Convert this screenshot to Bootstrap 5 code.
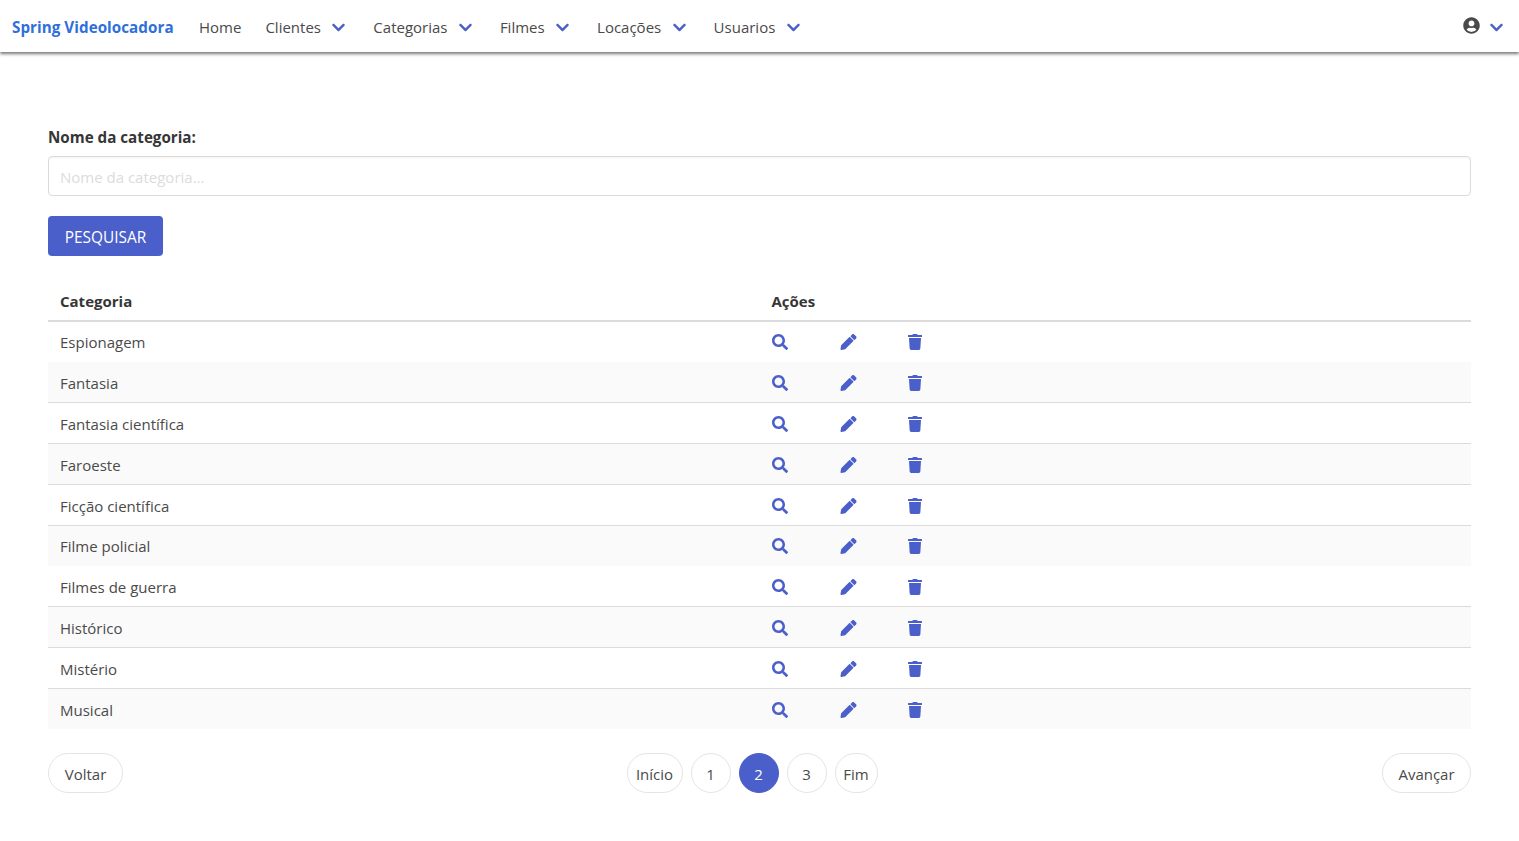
<!DOCTYPE html>
<html lang="pt-BR">
<head>
<meta charset="utf-8">
<title>Spring Videolocadora</title>
<link href="https://cdn.jsdelivr.net/npm/bootstrap@5.3.0/dist/css/bootstrap.min.css" rel="stylesheet">
<style>
body{font-family:"Open Sans","Noto Sans",sans-serif;font-size:15px;color:#4a4a4a;background:#fff}
.top-bar{height:52px;padding:0;background:#fff;box-shadow:0 2px 3px rgba(10,10,10,.55);align-items:center}
.top-bar .navbar-brand{width:163px;font-size:15.2px;font-weight:700;color:#2f6fdb;padding:3px 0 0;margin:0 12px;letter-spacing:.05px}
.top-item{color:#4a4a4a;padding:2px 12px 0;height:52px;display:flex;align-items:center;text-decoration:none}
.chev{width:13px;height:15px;fill:#4a5fc9;margin-left:11.4px;margin-right:4px}
.chev-u{margin-left:10px}
.page-wrap{padding:75px 48px 0}
.field-label{font-weight:700;color:#363636;font-size:15.2px;line-height:20px;margin-bottom:9px;display:block}
.search-input{height:40px;border:1px solid #dbdbdb;border-radius:4px;padding:2px 11px 0;font-size:15px;box-shadow:inset 0 1px 2px rgba(10,10,10,.05)}
.search-input::placeholder{color:#dcdcdc}
.go-btn{height:40px;width:115px;background:#4a5fc9;border:0;color:#fff;border-radius:4px;font-size:15.4px;padding:4px 0 0;margin-top:20px}
.go-btn:hover{background:#4a5fc9;color:#fff}
.cat-table{margin:25px 0 0;width:100%;table-layout:fixed;color:#363636}
.cat-table th{height:40px;padding:2px 12px 0;font-weight:700;color:#363636;border-bottom:2px solid #dbdbdb;vertical-align:middle}
.cat-table td{height:40.85px;padding:2px 12px 0;vertical-align:middle;border-bottom:1px solid #dbdbdb;background:#fff;box-shadow:none;color:#4a4a4a}
.cat-table td.act-cell{padding-top:1.5px}
.cat-table tr:nth-child(even) td{background:#fafafa}
.cat-table tr.no-line td{border-bottom-color:transparent}
.act-icons{display:flex;align-items:center}
.act-icons span{width:68px;display:flex}
.ico{height:16px;fill:#4a5fc9;display:block}
.ico-s{width:16px}.ico-p{width:17px}.ico-t{width:14px}
.pager-row{margin-top:23px}
.pg{height:40px;border:1px solid #e4e4e4;border-radius:20px;background:#fff;color:#4a4a4a;display:flex;align-items:center;justify-content:center;font-size:15px;text-decoration:none;padding-top:2px}
.pg-side{width:75px}
.pg-next{width:89px}
.pg-num{width:40px}
.pg-first{width:56px}
.pg-last{width:43px}
.pg.on{background:#4a5fc9;border-color:#4a5fc9;color:#fff}
.pg-mid{gap:8px;margin-right:1px}
.user-ico{width:17px;height:17px;fill:#4a4a4a;margin-top:-4px}
</style>
</head>
<body>
<svg width="0" height="0" class="position-absolute">
<symbol id="i-search" viewBox="0 0 512 512"><path d="M505 442.7L405.3 343c-4.5-4.5-10.6-7-17-7H372c27.6-35.3 44-79.7 44-128C416 93.1 322.9 0 208 0S0 93.1 0 208s93.1 208 208 208c48.3 0 92.7-16.4 128-44v16.3c0 6.4 2.5 12.5 7 17l99.7 99.7c9.4 9.4 24.6 9.4 33.9 0l28.3-28.3c9.4-9.4 9.4-24.6.1-34zM208 336c-70.7 0-128-57.2-128-128 0-70.7 57.2-128 128-128 70.7 0 128 57.2 128 128 0 70.7-57.2 128-128 128z"/></symbol>
<symbol id="i-pen" viewBox="0 0 512 512"><path d="M497.9 142.1l-46.1 46.1c-4.7 4.7-12.3 4.7-17 0l-111-111c-4.7-4.7-4.7-12.3 0-17l46.1-46.1c18.7-18.7 49.1-18.7 67.9 0l60.1 60.1c18.8 18.7 18.8 49.1 0 67.9zM284.2 99.8L21.6 362.4.4 483.9c-2.9 16.4 11.4 30.6 27.8 27.8l121.5-21.3 262.6-262.6c4.7-4.7 4.7-12.3 0-17l-111-111c-4.8-4.7-12.4-4.7-17.1 0z"/></symbol>
<symbol id="i-trash" viewBox="0 0 448 512"><path d="M432 32H312l-9.4-18.7A24 24 0 0 0 281.1 0H166.8a23.72 23.72 0 0 0-21.4 13.3L136 32H16A16 16 0 0 0 0 48v32a16 16 0 0 0 16 16h416a16 16 0 0 0 16-16V48a16 16 0 0 0-16-16zM53.2 467a48 48 0 0 0 47.9 45h245.8a48 48 0 0 0 47.9-45L416 128H32z"/></symbol>
<symbol id="i-user" viewBox="0 0 496 512"><path d="M248 8C111 8 0 119 0 256s111 248 248 248 248-111 248-248S385 8 248 8zm0 96c48.6 0 88 39.4 88 88s-39.4 88-88 88-88-39.4-88-88 39.4-88 88-88zm0 344c-58.7 0-111.3-26.6-146.5-68.2 18.8-35.4 55.6-59.8 98.5-59.8 2.4 0 4.8.4 7.1 1.1 13 4.2 26.6 6.9 40.9 6.9 14.3 0 28-2.7 40.9-6.9 2.3-.7 4.7-1.1 7.1-1.1 42.9 0 79.7 24.4 98.5 59.8C359.3 421.4 306.7 448 248 448z"/></symbol>
<symbol id="i-chev" viewBox="0 0 448 512"><path d="M207.029 381.476L12.686 187.132c-9.373-9.373-9.373-24.569 0-33.941l22.667-22.667c9.357-9.357 24.522-9.375 33.901-.04L224 284.505l154.745-154.021c9.379-9.335 24.544-9.317 33.901.04l22.667 22.667c9.373 9.373 9.373 24.569 0 33.941L240.971 381.476c-9.373 9.372-24.569 9.372-33.942 0z"/></symbol>
</svg>
<nav class="navbar top-bar d-flex flex-nowrap justify-content-start">
  <a class="navbar-brand" href="#">Spring Videolocadora</a>
  <a class="top-item" href="#">Home</a>
  <a class="top-item" href="#">Clientes<svg class="chev"><use href="#i-chev"/></svg></a>
  <a class="top-item" href="#">Categorias<svg class="chev"><use href="#i-chev"/></svg></a>
  <a class="top-item" href="#">Filmes<svg class="chev"><use href="#i-chev"/></svg></a>
  <a class="top-item" href="#">Locações<svg class="chev"><use href="#i-chev"/></svg></a>
  <a class="top-item" href="#">Usuarios<svg class="chev"><use href="#i-chev"/></svg></a>
  <a class="top-item ms-auto" href="#"><svg class="user-ico"><use href="#i-user"/></svg><svg class="chev chev-u"><use href="#i-chev"/></svg></a>
</nav>
<main class="page-wrap">
  <label class="field-label" for="nome">Nome da categoria:</label>
  <input id="nome" class="form-control search-input" type="text" placeholder="Nome da categoria...">
  <button class="btn go-btn" type="button">PESQUISAR</button>
  <table class="table cat-table">
    <thead><tr><th>Categoria</th><th>Ações</th></tr></thead>
    <tbody>
      <tr class="no-line"><td>Espionagem</td><td class="act-cell"><div class="act-icons"><span><svg class="ico ico-s"><use href="#i-search"/></svg></span><span><svg class="ico ico-p"><use href="#i-pen"/></svg></span><span><svg class="ico ico-t"><use href="#i-trash"/></svg></span></div></td></tr>
      <tr><td>Fantasia</td><td class="act-cell"><div class="act-icons"><span><svg class="ico ico-s"><use href="#i-search"/></svg></span><span><svg class="ico ico-p"><use href="#i-pen"/></svg></span><span><svg class="ico ico-t"><use href="#i-trash"/></svg></span></div></td></tr>
      <tr><td>Fantasia científica</td><td class="act-cell"><div class="act-icons"><span><svg class="ico ico-s"><use href="#i-search"/></svg></span><span><svg class="ico ico-p"><use href="#i-pen"/></svg></span><span><svg class="ico ico-t"><use href="#i-trash"/></svg></span></div></td></tr>
      <tr><td>Faroeste</td><td class="act-cell"><div class="act-icons"><span><svg class="ico ico-s"><use href="#i-search"/></svg></span><span><svg class="ico ico-p"><use href="#i-pen"/></svg></span><span><svg class="ico ico-t"><use href="#i-trash"/></svg></span></div></td></tr>
      <tr><td>Ficção científica</td><td class="act-cell"><div class="act-icons"><span><svg class="ico ico-s"><use href="#i-search"/></svg></span><span><svg class="ico ico-p"><use href="#i-pen"/></svg></span><span><svg class="ico ico-t"><use href="#i-trash"/></svg></span></div></td></tr>
      <tr class="no-line"><td>Filme policial</td><td class="act-cell"><div class="act-icons"><span><svg class="ico ico-s"><use href="#i-search"/></svg></span><span><svg class="ico ico-p"><use href="#i-pen"/></svg></span><span><svg class="ico ico-t"><use href="#i-trash"/></svg></span></div></td></tr>
      <tr><td>Filmes de guerra</td><td class="act-cell"><div class="act-icons"><span><svg class="ico ico-s"><use href="#i-search"/></svg></span><span><svg class="ico ico-p"><use href="#i-pen"/></svg></span><span><svg class="ico ico-t"><use href="#i-trash"/></svg></span></div></td></tr>
      <tr><td>Histórico</td><td class="act-cell"><div class="act-icons"><span><svg class="ico ico-s"><use href="#i-search"/></svg></span><span><svg class="ico ico-p"><use href="#i-pen"/></svg></span><span><svg class="ico ico-t"><use href="#i-trash"/></svg></span></div></td></tr>
      <tr><td>Mistério</td><td class="act-cell"><div class="act-icons"><span><svg class="ico ico-s"><use href="#i-search"/></svg></span><span><svg class="ico ico-p"><use href="#i-pen"/></svg></span><span><svg class="ico ico-t"><use href="#i-trash"/></svg></span></div></td></tr>
      <tr class="no-line"><td>Musical</td><td class="act-cell"><div class="act-icons"><span><svg class="ico ico-s"><use href="#i-search"/></svg></span><span><svg class="ico ico-p"><use href="#i-pen"/></svg></span><span><svg class="ico ico-t"><use href="#i-trash"/></svg></span></div></td></tr>
    </tbody>
  </table>
  <div class="pager-row d-flex justify-content-between align-items-center">
    <a class="pg pg-side" href="#">Voltar</a>
    <div class="d-flex pg-mid">
      <a class="pg pg-first" href="#">Início</a>
      <a class="pg pg-num" href="#">1</a>
      <a class="pg pg-num on" href="#">2</a>
      <a class="pg pg-num" href="#">3</a>
      <a class="pg pg-last" href="#">Fim</a>
    </div>
    <a class="pg pg-next" href="#">Avançar</a>
  </div>
</main>
</body>
</html>
